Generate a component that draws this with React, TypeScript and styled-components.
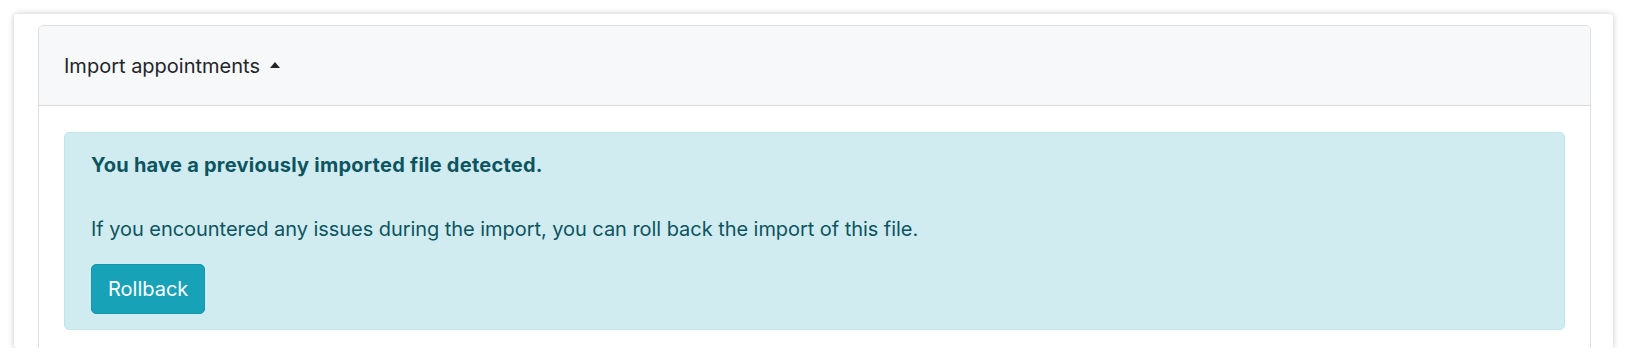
import React from 'react';
import styled, { createGlobalStyle } from 'styled-components';

// ── Global ───────────────────────────────────────────────────────────────────

const GlobalStyle = createGlobalStyle`
  html, body {
    margin: 0;
    padding: 0;
    background: #ffffff;
  }
  body {
    font-family: Inter, "Noto Sans", "Liberation Sans", sans-serif;
    font-size: 20px;
    line-height: 30px;
    color: #212529;
    -webkit-font-smoothing: antialiased;
  }
`;

// ── Styles ───────────────────────────────────────────────────────────────────

const Frame = styled.div`
  box-sizing: border-box;
  margin: 14px 0 0 14px;
  width: 1599px;
  height: 334px;
  padding: 11px 22px 0 24px;
  background: #ffffff;
  border-radius: 3px;
  box-shadow: 0 0 6px rgba(0, 0, 0, 0.22);
  overflow: hidden;
`;

const Card = styled.section`
  border: 1px solid #dfdfdf;
  border-radius: 5px;
  background: #ffffff;
`;

const CardHeader = styled.header`
  display: flex;
  align-items: center;
  height: 79px;
  padding: 0 25px;
  background: #f7f8f9;
  border-bottom: 1px solid #dcdcdc;
  border-radius: 5px 5px 0 0;
`;

const Toggle = styled.button`
  display: inline-flex;
  align-items: center;
  padding: 0;
  border: 0;
  background: none;
  font: inherit;
  color: #212529;
  cursor: pointer;
`;

const Caret = styled.span`
  display: inline-block;
  width: 0;
  height: 0;
  margin-left: 10px;
  margin-top: -2px;
  border-left: 5px solid transparent;
  border-right: 5px solid transparent;
  border-bottom: 6px solid #212529;
`;

const CardBody = styled.div`
  padding: 26px 25px 25px;
`;

const Alert = styled.div`
  padding: 17px 25px 15px 26px;
  border: 1px solid #bee5eb;
  border-radius: 5px;
  background: #d1ecf1;
  color: #0c5460;
`;

const AlertHeading = styled.p`
  margin: 0;
  font-weight: 700;
  letter-spacing: 0.25px;
`;

const AlertText = styled.p`
  margin: 34px 0 20px;
  letter-spacing: -0.05px;
`;

const Button = styled.button`
  box-sizing: border-box;
  height: 50px;
  padding: 0 16px;
  border: 1px solid #1598ad;
  border-radius: 5px;
  background: #17a2b8;
  color: #ffffff;
  font: inherit;
  cursor: pointer;
`;

// ── Component ────────────────────────────────────────────────────────────────

export default function App() {
  return (
    <>
      <GlobalStyle />
      <Frame>
        <Card>
          <CardHeader>
            <Toggle type="button">
              Import appointments
              <Caret aria-hidden />
            </Toggle>
          </CardHeader>
          <CardBody>
            <Alert role="alert">
              <AlertHeading>You have a previously imported file detected.</AlertHeading>
              <AlertText>
                If you encountered any issues during the import, you can roll back the import of
                this file.
              </AlertText>
              <Button type="button">Rollback</Button>
            </Alert>
          </CardBody>
        </Card>
      </Frame>
    </>
  );
}
